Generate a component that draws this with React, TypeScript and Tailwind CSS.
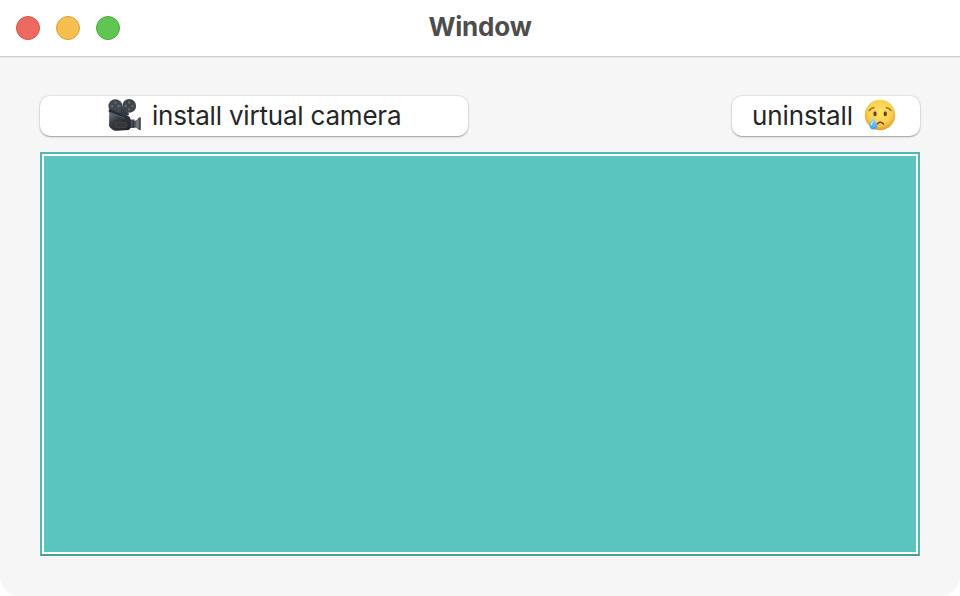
function MovieCamera() {
  return (
    <svg className="mb-[3px] h-8 w-[34px] shrink-0" viewBox="0 0 34 32">
      <defs>
        <linearGradient id="body" x1="0" y1="0" x2="1" y2="1">
          <stop offset="0" stopColor="#737b84" />
          <stop offset="0.4" stopColor="#343a41" />
          <stop offset="1" stopColor="#1e2125" />
        </linearGradient>
        <linearGradient id="lens" x1="0" y1="0" x2="1" y2="0">
          <stop offset="0" stopColor="#2a2f35" />
          <stop offset="0.6" stopColor="#7b838a" />
          <stop offset="0.85" stopColor="#464b51" />
          <stop offset="1" stopColor="#1c1f23" />
        </linearGradient>
      </defs>
      <path d="M22 20.5h5.5v8.5H22z" fill="#42484f" />
      <path d="M26 22.3q4.2-.8 5.7-3.8 1.6-.6 2 .3v12q-.6.8-2 0Q30 28.4 26 28z" fill="url(#lens)" />
      <path d="M2.2 14l4-1.5 15 4.5q2.3 1 2.3 3v8.6q0 2-2 2.4l-11 .8q-3 0-4.5-.9L3.5 29Q2 28 2 26z" fill="url(#body)" />
      <rect x="8.5" y="23.6" width="11.5" height="5" rx="1.2" fill="#3a3739" stroke="#505257" strokeWidth="0.5" />
      <path d="M12 8h8l2 8-6 2-6-3z" fill="#343a40" />
      <circle cx="8.4" cy="7.2" r="7" fill="#42484f" />
      <circle cx="22.2" cy="6.9" r="6.9" fill="#3e444b" />
      <g fill="#626971">
        <circle cx="8.4" cy="3.8" r="1.2" />
        <circle cx="5" cy="7.2" r="1.2" />
        <circle cx="11.8" cy="7" r="1.2" />
        <circle cx="22.2" cy="3.5" r="1.2" />
        <circle cx="18.8" cy="7" r="1.2" />
        <circle cx="25.6" cy="7" r="1.2" />
        <circle cx="22.2" cy="10.3" r="1.2" />
      </g>
      <path d="M1.5 11.2l2-.9 16.7 7.7-1.4 1.4L2 13.4z" fill="#262b31" />
      <path d="M3 13.2l14.6 6" stroke="#727a82" strokeWidth="0.6" />
    </svg>
  );
}

function CryingFace() {
  return (
    <svg className="mb-[3px] ml-px h-8 w-8 shrink-0" viewBox="0 0 32 32">
      <defs>
        <radialGradient id="face" cx="0.5" cy="0.4" r="0.6">
          <stop offset="0" stopColor="#ffe36b" />
          <stop offset="0.65" stopColor="#fbd04e" />
          <stop offset="1" stopColor="#e69a2c" />
        </radialGradient>
        <linearGradient id="tear" x1="0" y1="0" x2="0" y2="1">
          <stop offset="0" stopColor="#a4e2fb" />
          <stop offset="1" stopColor="#3a9ee4" />
        </linearGradient>
      </defs>
      <circle cx="16" cy="16" r="15.2" fill="url(#face)" />
      <ellipse cx="11" cy="14.8" rx="1.7" ry="2.5" fill="#6c4017" />
      <ellipse cx="21.3" cy="14.8" rx="1.7" ry="2.5" fill="#6c4017" />
      <path d="M5.2 11.6q1.6-2.6 4.8-2.9M27 11.6q-1.6-2.6-4.8-2.9" fill="none" stroke="#8b581e" strokeWidth="1.2" strokeLinecap="round" />
      <path d="M13.2 25q3-3.4 6.3 0" fill="none" stroke="#704014" strokeWidth="1.5" strokeLinecap="round" />
      <path d="M9.4 18.2C8.2 21.4 5.6 23.7 5.6 26.7a3.8 3.8 0 0 0 7.6 0c0-3-2.8-5.2-3.8-8.5z" fill="url(#tear)" />
      <path d="M8.7 22.5q-1.5 2-1.4 3.7" stroke="#d8f4ff" strokeWidth="1.1" fill="none" />
    </svg>
  );
}

const button =
  "flex h-10 items-center rounded-[10px] bg-white text-[26px] leading-none text-[#262626] shadow-[0_0_1px_1px_rgba(0,0,0,0.08),0_1px_1px_rgba(0,0,0,0.22),0_2px_3px_rgba(0,0,0,0.06)]";

export default function App() {
  return (
    <div className="h-[596px] w-[960px] bg-white font-['Inter',sans-serif]">
      <div className="flex h-full flex-col overflow-hidden rounded-b-[20px] bg-[#f6f6f6]">
        <header className="grid h-[57px] shrink-0 grid-cols-3 items-center border-b border-[#d0d0d0] bg-white px-4 shadow-[0_1px_0_#e6e6e6]">
          <div className="flex gap-4">
            <span className="size-6 rounded-full border border-[#d6534b] bg-[#ed6a5e]" />
            <span className="size-6 rounded-full border border-[#d8a03b] bg-[#f5bf4f]" />
            <span className="size-6 rounded-full border border-[#52a842] bg-[#61c554]" />
          </div>
          <h1 className="pb-[2px] text-center text-[26px] leading-none font-bold tracking-[-0.2px] text-[#4d4d4d]">
            Window
          </h1>
        </header>
        <main className="flex flex-1 flex-col gap-4 px-10 pt-[39px] pb-10">
          <div className="flex justify-between">
            <button className={button + " w-[428px] gap-[10px] pl-[67px]"}>
              <MovieCamera />
              <span className="pb-px pl-px tracking-[-0.2px] whitespace-nowrap">install virtual camera</span>
            </button>
            <button className={button + " w-[188px] gap-[10px] pl-[20px]"}>
              <span className="pb-px tracking-[-0.12px] whitespace-nowrap">uninstall</span>
              <CryingFace />
            </button>
          </div>
          <div className="flex-1 border-2 border-[#52b9b2] border-b-[#479f99] bg-white p-[2px]">
            <div className="h-full bg-[#5ac4bf]" />
          </div>
        </main>
      </div>
    </div>
  );
}
